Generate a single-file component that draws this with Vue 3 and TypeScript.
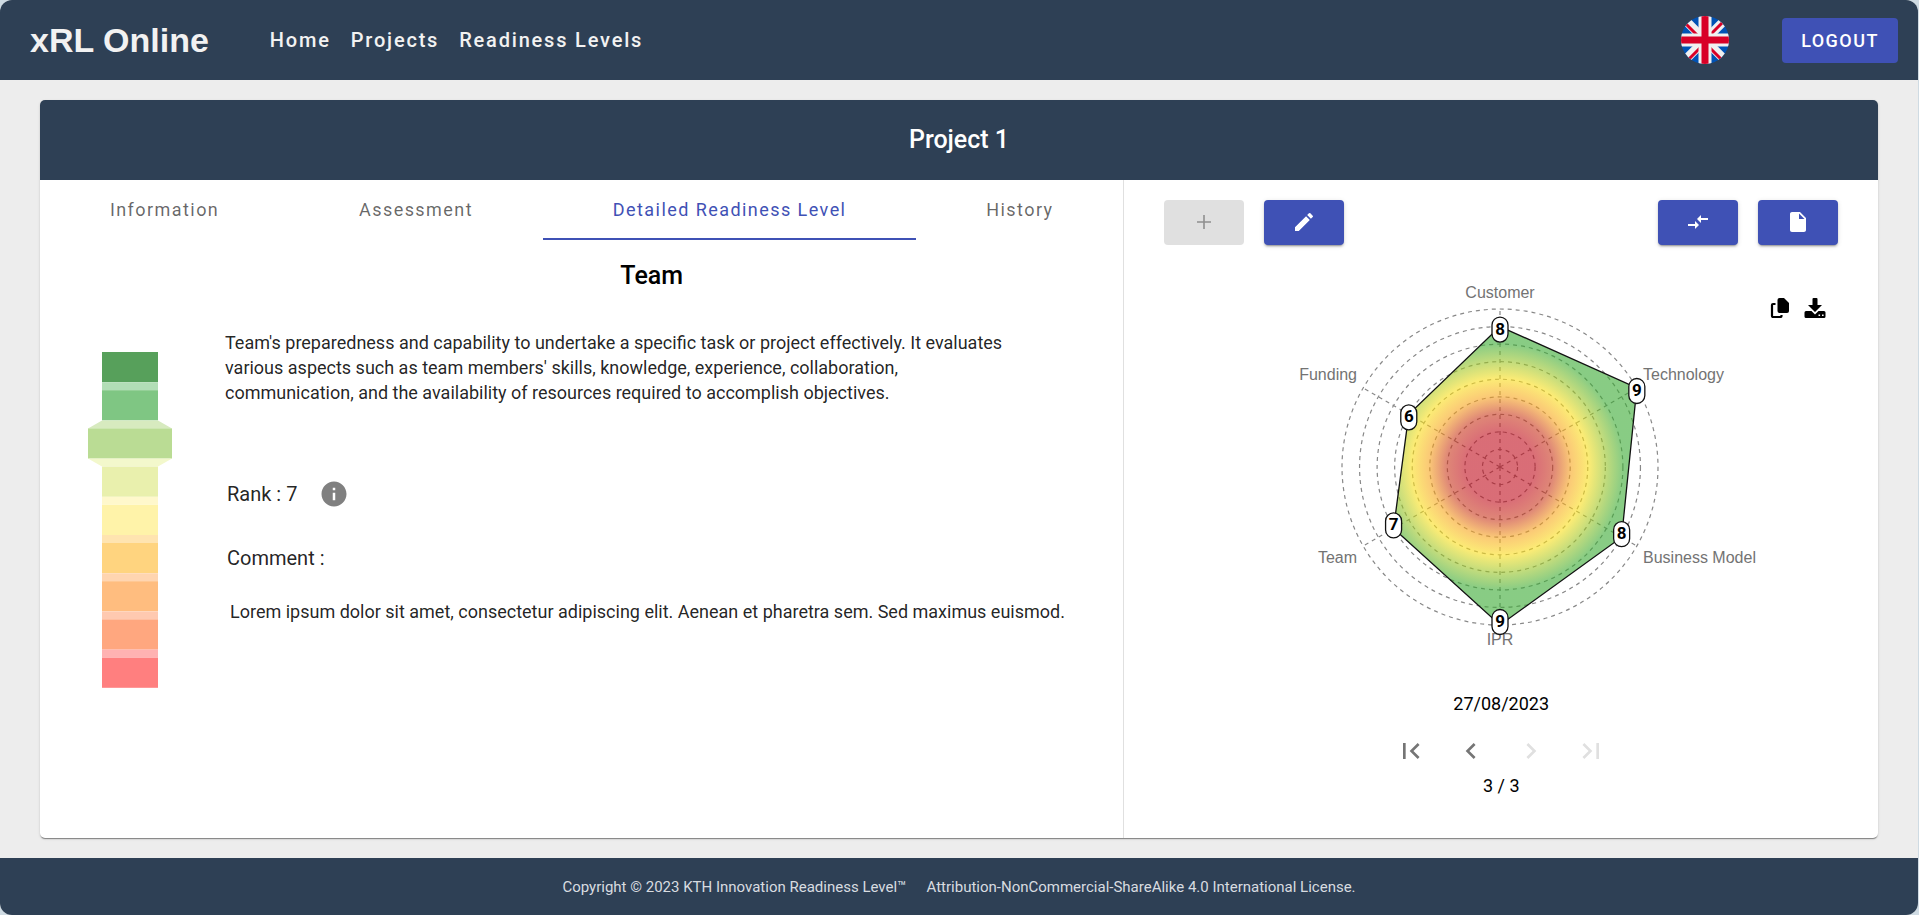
<script setup lang="ts">
import { computed, ref } from 'vue'

interface Axis {
  name: string
  value: number
}

const links = ['Home', 'Projects', 'Readiness Levels']
const tabs = ['Information', 'Assessment', 'Detailed Readiness Level', 'History']
const activeTab = ref('Detailed Readiness Level')

const axes: Axis[] = [
  { name: 'Customer', value: 8 },
  { name: 'Technology', value: 9 },
  { name: 'Business Model', value: 8 },
  { name: 'IPR', value: 9 },
  { name: 'Team', value: 7 },
  { name: 'Funding', value: 6 },
]

const radius = 158
const maxLevel = 9
const rings = Array.from({ length: maxLevel }, (_, i) => ((i + 1) * radius) / maxLevel)

const points = computed(() =>
  axes.map((axis, i) => {
    const angle = (i * Math.PI * 2) / axes.length
    const sin = Math.sin(angle)
    const cos = Math.cos(angle)
    const r = (axis.value * radius) / maxLevel
    return {
      ...axis,
      x: sin * r,
      y: -cos * r,
      endX: sin * radius,
      endY: -cos * radius,
      // badges lean a little towards the middle of the chart
      badgeY: -cos * r + (cos > 0 ? 3 : -3),
      labelX: Math.abs(sin) < 0.01 ? 0 : Math.sign(sin) * 143,
      labelY: Math.abs(sin) < 0.01 ? (cos > 0 ? -169 : 178) : cos > 0 ? -87 : 96,
      anchor: Math.abs(sin) < 0.01 ? 'middle' : sin > 0 ? 'start' : 'end',
    }
  }),
)
const polygon = computed(() => points.value.map((p) => `${p.x},${p.y}`).join(' '))

const rank = 7
const levels = [
  { solid: '#57a05b', link: '' },
  { solid: '#7fc683', link: '#b2deb6' },
  { solid: '#badc94', link: '#d7eabf' },
  { solid: '#e9f0ad', link: '#f3f8cc' },
  { solid: '#fff3a9', link: '#fff8cc' },
  { solid: '#ffd47f', link: '#ffe4b0' },
  { solid: '#ffbd7f', link: '#ffd5b0' },
  { solid: '#ffa77f', link: '#ffc9b0' },
  { solid: '#ff7f7f', link: '#ffb2b2' },
]
const pitch = 38.2
const gauge = levels.map((level, i) => {
  const half = (n: number) => (maxLevel - n === rank ? 42 : 28)
  const y = i * pitch
  const w = half(i)
  const above = half(i - 1)
  return {
    ...level,
    x: 42 - w,
    y,
    w: w * 2,
    linkPoints: `${42 - above},${y - 8} ${42 + above},${y - 8} ${42 + w},${y} ${42 - w},${y}`,
  }
})
</script>

<template>
  <div class="page">
    <header class="topbar">
      <a class="brand" href="#">xRL Online</a>
      <nav class="nav">
        <a v-for="link in links" :key="link" href="#">{{ link }}</a>
      </nav>
      <button class="language" type="button" aria-label="English">
        <svg viewBox="0 0 48 48" width="48" height="48">
          <clipPath id="disc"><circle cx="24" cy="24" r="24" /></clipPath>
          <g clip-path="url(#disc)">
            <rect width="48" height="48" fill="#0052b4" />
            <path d="M0 0L48 48M48 0L0 48" stroke="#f0f0f0" stroke-width="9" />
            <path d="M5 8L18 21M8 43L20 31M43 5L30 18M40 43L28 31" stroke="#d80027" stroke-width="3" />
            <path d="M24 0V48M0 24H48" stroke="#f0f0f0" stroke-width="13" />
            <path d="M24 0V48M0 24H48" stroke="#d80027" stroke-width="7" />
          </g>
        </svg>
      </button>
      <button class="logout" type="button">LOGOUT</button>
    </header>

    <main class="main">
      <section class="card">
        <h1 class="title">Project 1</h1>
        <div class="body">
          <div class="left">
            <div class="tabs" role="tablist">
              <button
                v-for="tab in tabs"
                :key="tab"
                type="button"
                role="tab"
                class="tab"
                :class="{ active: tab === activeTab }"
                :aria-selected="tab === activeTab"
                @click="activeTab = tab"
              >
                {{ tab }}
              </button>
            </div>
            <div class="detail">
              <svg class="gauge" viewBox="0 0 84 336" width="84" height="336">
                <g v-for="(g, i) in gauge" :key="i">
                  <polygon v-if="g.link" :points="g.linkPoints" :fill="g.link" />
                  <rect :x="g.x" :y="g.y" :width="g.w" height="30.2" :fill="g.solid" />
                </g>
              </svg>
              <div class="text">
                <h2>Team</h2>
                <p class="description">
                  Team's preparedness and capability to undertake a specific task or project effectively. It evaluates
                  various aspects such as team members' skills, knowledge, experience, collaboration, communication,
                  and the availability of resources required to accomplish objectives.
                </p>
                <div class="rank">
                  <span>Rank : 7</span>
                  <button type="button" class="info" aria-label="About this rank">
                    <svg viewBox="0 0 24 24" width="30" height="30" fill="#808080">
                      <path d="M12 2C6.48 2 2 6.48 2 12s4.48 10 10 10 10-4.48 10-10S17.52 2 12 2zm1 15h-2v-6h2v6zm0-8h-2V7h2v2z" />
                    </svg>
                  </button>
                </div>
                <div class="comment-title">Comment :</div>
                <p class="comment">
                  Lorem ipsum dolor sit amet, consectetur adipiscing elit. Aenean et pharetra sem. Sed maximus euismod.
                </p>
              </div>
            </div>
          </div>

          <div class="right">
            <div class="actions">
              <button class="action" type="button" disabled aria-label="Add">
                <svg viewBox="0 0 24 24" width="24" height="24"><path d="M19 12.8h-6.2V19h-1.6v-6.2H5v-1.6h6.2V5h1.6v6.2H19z" /></svg>
              </button>
              <button class="action" type="button" aria-label="Edit">
                <svg viewBox="0 0 24 24" width="24" height="24"><path d="M3 17.25V21h3.75L17.81 9.94l-3.75-3.75L3 17.25zM20.71 7.04a1 1 0 0 0 0-1.41l-2.34-2.34a1 1 0 0 0-1.41 0l-1.83 1.83 3.75 3.75 1.83-1.83z" /></svg>
              </button>
              <button class="action push" type="button" aria-label="Compare">
                <svg viewBox="0 0 24 24" width="24" height="24"><path d="M9.01 14H2v2h7.01v3L13 15l-3.99-4v3zm5.98-1v-3H22V8h-7.01V5L11 9l3.99 4z" /></svg>
              </button>
              <button class="action" type="button" aria-label="Report">
                <svg viewBox="0 0 24 24" width="24" height="24"><path d="M6 2c-1.1 0-1.99.9-1.99 2L4 20c0 1.1.89 2 1.99 2H18c1.1 0 2-.9 2-2V8l-6-6H6zm7 7V3.5L18.5 9H13z" /></svg>
              </button>
            </div>

            <div class="chart">
              <div class="export">
                <button type="button" aria-label="Copy chart">
                  <svg viewBox="0 0 20 20" width="20" height="20">
                    <path d="M9.5 0H14L19 5V13a2 2 0 0 1-2 2H9.5a2 2 0 0 1-2-2V2a2 2 0 0 1 2-2z" />
                    <path d="M5.5 6H3A1 1 0 0 0 2 7V18a1 1 0 0 0 1 1H10.5a1 1 0 0 0 1-1V17" fill="none" stroke="#000" stroke-width="2.2" />
                  </svg>
                </button>
                <button type="button" aria-label="Download chart">
                  <svg viewBox="0 0 22 20" width="22" height="20">
                    <path d="M8.5 1a1 1 0 0 1 1-1h3a1 1 0 0 1 1 1V7H18L11 14L4 7H8.5z" />
                    <path fill-rule="evenodd" d="M2 13H7.5L11 16.500L14.5 13H20a1.500 1.500 0 0 1 1.500 1.500V18.500A1.500 1.500 0 0 1 20 20H2A1.500 1.500 0 0 1 .5 18.500V14.500A1.500 1.500 0 0 1 2 13zM14.500 16.500v1.600h1.600v-1.600zM18 16.500v1.600h1.600v-1.600z" />
                  </svg>
                </button>
              </div>
              <svg class="radar" viewBox="-279 -190 560 380" width="560" height="380">
                <defs>
                  <radialGradient id="heat" gradientUnits="userSpaceOnUse" cx="0" cy="0" r="158">
                    <stop offset="0.22" stop-color="#c00c1c" />
                    <stop offset="0.34" stop-color="#ca391c" />
                    <stop offset="0.45" stop-color="#f8a51b" />
                    <stop offset="0.56" stop-color="#fadf19" />
                    <stop offset="0.78" stop-color="#39aa32" />
                  </radialGradient>
                </defs>
                <g class="grid">
                  <circle v-for="r in rings" :key="r" :r="r" />
                  <line v-for="p in points" :key="p.name" x1="0" y1="0" :x2="p.endX" :y2="p.endY" />
                </g>
                <polygon :points="polygon" fill="url(#heat)" fill-opacity="0.6" stroke="#111" stroke-width="1.3" />
                <text v-for="p in points" :key="p.name" class="axis" :x="p.labelX" :y="p.labelY" :text-anchor="p.anchor">{{ p.name }}</text>
                <g v-for="p in points" :key="p.name">
                  <rect :x="p.x - 8" :y="p.badgeY - 12.5" width="16" height="25" rx="8" fill="#fff" stroke="#111" stroke-width="1.3" />
                  <text class="value" :x="p.x" :y="p.badgeY + 5" text-anchor="middle">{{ p.value }}</text>
                </g>
              </svg>
            </div>

            <div class="date">27/08/2023</div>
            <div class="pager">
              <button type="button" aria-label="First"><svg viewBox="0 0 24 24" width="32" height="32"><path d="M18.41 16.59L13.82 12l4.59-4.59L17 6l-6 6 6 6zM6 6h2v12H6z" /></svg></button>
              <button type="button" aria-label="Previous"><svg viewBox="0 0 24 24" width="32" height="32"><path d="M15.41 7.41L14 6l-6 6 6 6 1.41-1.41L10.83 12z" /></svg></button>
              <button type="button" aria-label="Next" disabled><svg viewBox="0 0 24 24" width="32" height="32"><path d="M10 6L8.59 7.41 13.17 12l-4.58 4.59L10 18l6-6z" /></svg></button>
              <button type="button" aria-label="Last" disabled><svg viewBox="0 0 24 24" width="32" height="32"><path d="M5.59 7.41L10.18 12l-4.59 4.59L7 18l6-6-6-6zM16 6h2v12h-2z" /></svg></button>
            </div>
            <div class="count">3 / 3</div>
          </div>
        </div>
      </section>
    </main>

    <footer class="footer">
      <span>Copyright © 2023 KTH Innovation Readiness Level™</span>
      <span>Attribution-NonCommercial-ShareAlike 4.0 International License.</span>
    </footer>
  </div>
</template>

<style>
body {
  background: #cfdbe3;
}
</style>

<style scoped>
.page {
  display: flex;
  flex-direction: column;
  min-height: 100vh;
  margin-right: 1px;
  overflow: hidden;
  border-radius: 12px;
  background: #ededed;
  color: rgba(0, 0, 0, 0.87);
  font-family: Roboto, "Liberation Sans", sans-serif;
  font-size: 18px;
}
button {
  padding: 0;
  border: 0;
  background: none;
  color: inherit;
  font: inherit;
  cursor: pointer;
}
svg {
  display: block;
}
.topbar {
  display: flex;
  align-items: center;
  height: 80px;
  padding: 0 20px 0 30px;
  background: #2e4055;
  color: #f2f2f2;
}
.topbar a {
  color: inherit;
  text-decoration: none;
}
.brand {
  font: bold 34px "Liberation Sans", Arial, sans-serif;
}
.nav {
  display: flex;
  gap: 20px;
  margin-left: 61px;
  font-size: 20px;
  font-weight: 500;
  letter-spacing: 0.09em;
}
.language {
  margin-left: auto;
}
.logout {
  width: 116px;
  height: 45px;
  margin-left: 53px;
  border-radius: 4px;
  background: #3f51b5;
  color: #fff;
  font-weight: 500;
  letter-spacing: 0.08em;
}
.main {
  display: flex;
  flex: 1;
  padding: 20px 40px;
}
.card {
  display: flex;
  flex: 1;
  flex-direction: column;
  overflow: hidden;
  border-radius: 5px;
  background: #fff;
  box-shadow: 0 2px 1px -1px rgba(0, 0, 0, 0.3), 0 1px 1px rgba(0, 0, 0, 0.14), 0 1px 3px rgba(0, 0, 0, 0.12);
}
.title {
  margin: 0;
  background: #2e4055;
  color: #fff;
  font-size: 25px;
  font-weight: 500;
  line-height: 80px;
  text-align: center;
}
.body {
  display: flex;
  flex: 1;
}
.left {
  box-sizing: border-box;
  width: 59%;
  border-right: 1px solid #e0e0e0;
}
.tabs {
  display: flex;
}
.tab {
  flex: 1 1 auto;
  height: 60px;
  border-bottom: 2px solid transparent;
  color: rgba(0, 0, 0, 0.6);
  letter-spacing: 0.08em;
}
.tab.active {
  border-bottom-color: #3f51b5;
  color: #3f51b5;
}
.detail {
  display: flex;
  gap: 53px;
  padding: 20px 45px 40px 48px;
}
.gauge {
  flex: none;
  margin-top: 92px;
}
.text {
  flex: 1;
}
h2 {
  margin: 0;
  color: #000;
  font-size: 25px;
  font-weight: 500;
  line-height: 32px;
  text-align: center;
}
p {
  margin: 0;
}
.description {
  max-width: 800px;
  margin-top: 38px;
  line-height: 25px;
}
.rank {
  display: flex;
  align-items: center;
  gap: 22px;
  margin-top: 73px;
  padding-left: 2px;
  font-size: 20px;
  line-height: 32px;
}
.comment-title {
  margin-top: 32px;
  padding-left: 2px;
  font-size: 20px;
  line-height: 32px;
}
.comment {
  margin-top: 24px;
  padding-left: 5px;
  line-height: 28px;
}
.right {
  display: flex;
  flex: 1;
  flex-direction: column;
  align-items: center;
  box-sizing: border-box;
  padding: 20px 40px;
}
.actions {
  display: flex;
  gap: 20px;
  width: 100%;
}
.action {
  display: flex;
  align-items: center;
  justify-content: center;
  width: 80px;
  height: 45px;
  padding-bottom: 2px;
  border-radius: 4px;
  background: #3f51b5;
  fill: #fff;
  box-shadow: 0 3px 1px -2px rgba(0, 0, 0, 0.2), 0 2px 2px rgba(0, 0, 0, 0.14), 0 1px 5px rgba(0, 0, 0, 0.12);
}
.action:disabled {
  background: #e0e0e0;
  fill: #8f8f8f;
  box-shadow: none;
}
.push {
  margin-left: auto;
}
.chart {
  position: relative;
  width: 100%;
  margin-top: 32px;
}
.radar {
  margin: 0 auto;
}
.export {
  position: absolute;
  top: 21px;
  right: 12px;
  display: flex;
  gap: 14px;
}
.grid {
  fill: none;
  stroke: #888;
  stroke-width: 1.2;
  stroke-dasharray: 4 4;
}
.axis {
  fill: #737373;
  font: 16px "Liberation Sans", Arial, sans-serif;
}
.value {
  fill: #000;
  font: bold 17px Roboto, sans-serif;
}
.date {
  margin-top: 33px;
  line-height: 28px;
  color: #000;
}
.pager {
  display: flex;
  gap: 28px;
  margin-top: 17px;
  fill: #757575;
}
.pager button:disabled {
  fill: #e0e0e0;
}
.count {
  margin-top: 5px;
  line-height: 28px;
  color: #000;
}
.footer {
  display: flex;
  flex-wrap: wrap;
  align-items: center;
  justify-content: center;
  gap: 20px;
  height: 57px;
  background: #2e4055;
  color: #d8dce0;
  font-size: 15px;
}
</style>
